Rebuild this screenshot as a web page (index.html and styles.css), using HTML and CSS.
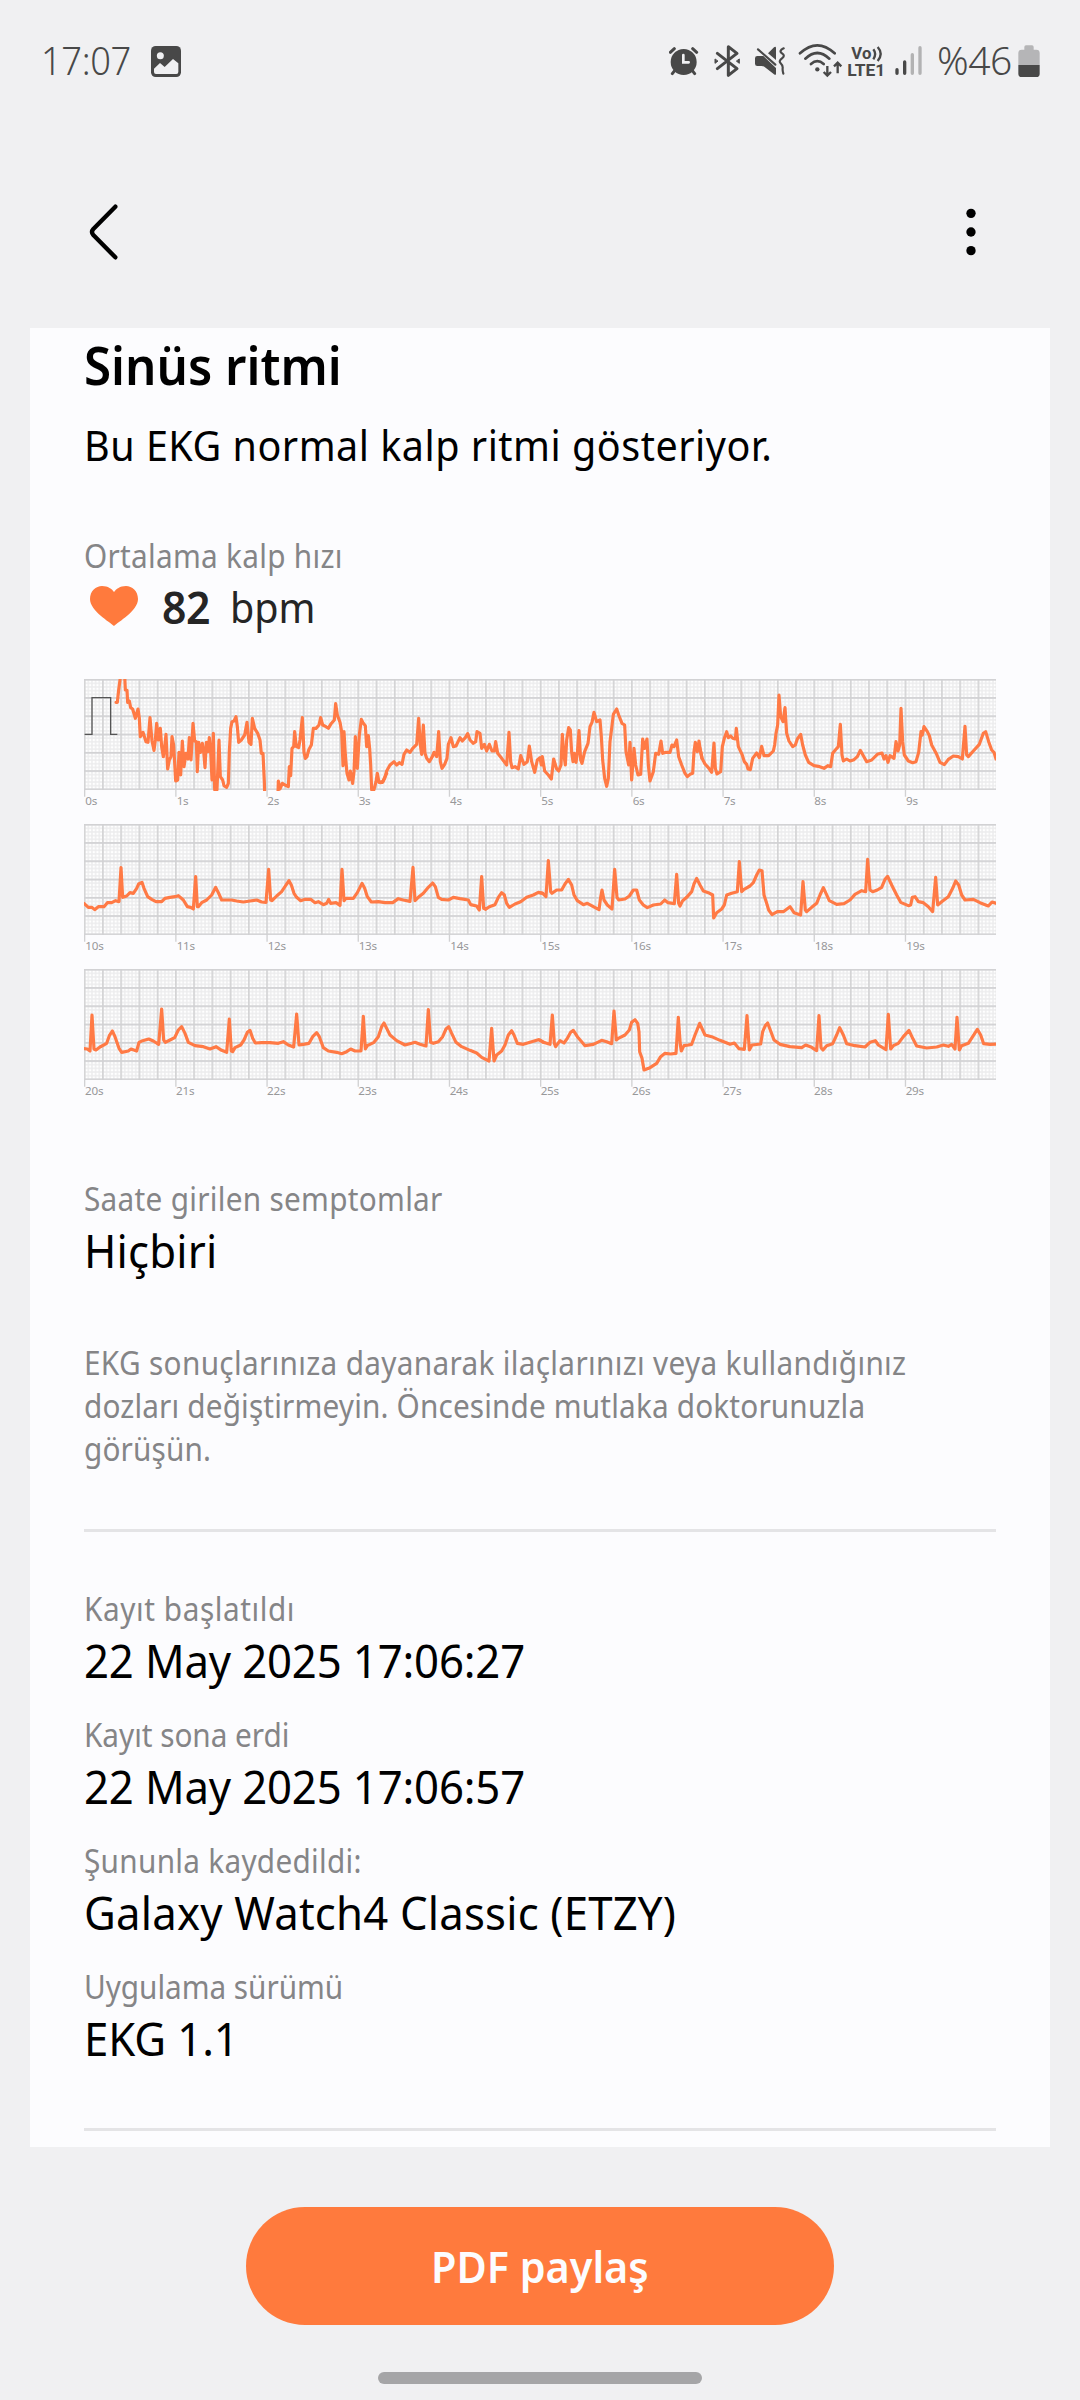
FILE: index.html
```html
<!DOCTYPE html>
<html lang="tr">
<head>
<meta charset="utf-8">
<title>EKG</title>
<link rel="stylesheet" href="styles.css">
</head>
<body>
<div class="screen">
  <header class="status">
    <span class="status-text clock">17:07</span>
    <svg class="photo" width="30" height="36" viewBox="441 69 90 108">
      <rect x="441" y="78" width="90" height="93" rx="14" fill="#484848"/>
      <circle cx="469" cy="107" r="10.5" fill="#f0f0f2"/>
      <path d="M450 146l18-17 14 12 25-24 16 13v26q0 6-6 6h-61q-6 0-6-6z" fill="#f0f0f2"/>
    </svg>
    <div class="status-icons">
      <svg width="30" height="36" viewBox="84 69 90 108" fill="none" stroke="#484848" stroke-linecap="round">
        <circle cx="128" cy="126" r="39" fill="#484848" stroke="none"/>
        <path d="M88 97l12-11M167 97l-12-11M101 152l-7 9M154 152l7 9" stroke-width="9"/>
        <path d="M127 105v22h16" stroke="#f0f0f2" stroke-width="8"/>
      </svg>
      <svg width="28" height="36" viewBox="216 69 84 108" fill="none" stroke="#484848" stroke-width="9" stroke-linecap="round" stroke-linejoin="round">
        <path d="M229 100l59 46-26 20V80l26 20-59 46"/>
        <path d="M222 118v12l8-6zM295 118v12l-8-6z" fill="#484848" stroke-width="3"/>
      </svg>
      <svg width="30" height="36" viewBox="345 69 90 108" fill="#484848">
        <path d="M345 115q0-7 7-7h18l38 36v17q0 6-6 2l-29-23q-3-2-8-2h-13q-7 0-7-7zM384 100l18-18q6-4 6 3v35z"/>
        <path d="M354 88l52 46M431 85q-16 8-5 15t0 15-4 15 6 14 2 17" fill="none" stroke="#484848" stroke-width="6.500" stroke-linecap="round"/>
      </svg>
      <svg class="wifi" width="45" height="36" viewBox="474 69 135 108" fill="none" stroke="#484848" stroke-width="8" stroke-linecap="round">
        <path d="M480 100q52-48 104 0M496 116q36-34 72 0M513 132q19-17 38 0"/>
        <circle cx="532" cy="148" r="6.500" fill="#484848" stroke="none"/>
        <path d="M562 138v27M551 156l11 11 11-11M593 160v-28M582 139l11-11 11 11" stroke-width="7" stroke-linecap="butt"/>
      </svg>
      <svg class="volte" width="39" height="36" viewBox="621 69 117 108">
        <text x="634" y="117" font-size="50" textLength="60" lengthAdjust="spacingAndGlyphs">Vo</text>
        <text x="622" y="168" font-size="50" textLength="114" lengthAdjust="spacingAndGlyphs">LTE1</text>
        <path d="M700 88q11 14 0 30M713 81q18 20 0 42" fill="none" stroke="#484848" stroke-width="7"/>
      </svg>
      <svg class="signal" width="29" height="36" viewBox="762 69 87 108" stroke-width="10" stroke-linecap="round">
        <path d="M771 149v11M794 126v34" stroke="#484848"/>
        <path d="M817 104v56M840 83v77" stroke="#b2b2b3"/>
      </svg>
      <span class="status-text percent">%46</span>
      <svg class="battery" width="22" height="36" viewBox="1135 69 66 108">
        <path d="M1136 135v-36q0-10 10-10h8v-8q0-5 5-5h18q5 0 5 5v8h8q10 0 10 10v36z" fill="#b5b5b7"/>
        <path d="M1136 135h64v26q0 10-10 10h-44q-10 0-10-10z" fill="#484848"/>
      </svg>
    </div>
  </header>

  <nav class="appbar">
    <svg width="32" height="58" viewBox="258 549 96 174" fill="none" stroke="#000" stroke-width="13" stroke-linecap="round" stroke-linejoin="round">
      <path d="M340 560l-66 67q-8 9 0 18l66 67"/>
    </svg>
    <svg width="12" height="58" viewBox="974 549 36 174">
      <circle cx="992" cy="580" r="14"/><circle cx="992" cy="636" r="14"/><circle cx="992" cy="692" r="14"/>
    </svg>
  </nav>

  <main class="card">
    <h1>Sinüs ritmi</h1>
    <p class="result">Bu EKG normal kalp ritmi gösteriyor.</p>
    <div class="label rate-label">Ortalama kalp hızı</div>
    <div class="rate">
      <svg width="48" height="41" viewBox="0 0 48 41"><path d="M24 40C20 36 0 25 0 13C0 5 6 0 12 0C18 0 22 3 24 6C26 3 30 0 36 0C42 0 48 5 48 13C48 25 28 36 24 40Z" fill="#ff7a3d"/></svg>
      <b>82</b><span>bpm</span>
    </div>

    <svg class="defs" width="0" height="0">
      <defs>
        <pattern id="minor" x="44" y="44" width="10.944" height="10.966" patternUnits="userSpaceOnUse">
          <rect width="10.944" height="10.966" fill="#ececed"/><rect x="2.100" y="2.100" width="6.800" height="6.800" fill="#ffffff"/>
        </pattern>
        <pattern id="major" x="41.500" y="41.500" width="54.720" height="54.830" patternUnits="userSpaceOnUse">
          <path d="M0 2.500h55M2.500 0v55" stroke="#d1d1d3" stroke-width="4.500"/>
        </pattern>
        <clipPath id="plot"><rect x="42" y="42" width="2736" height="336"/></clipPath>
        <g id="paper">
          <rect x="42" y="42" width="2736" height="333" fill="url(#minor)"/>
          <rect x="42" y="42" width="2736" height="333" fill="url(#major)"/>
          <path d="M44 374v21M317.600 374v21M591.200 374v21M864.800 374v21M1138.400 374v21M1412 374v21M1685.600 374v21M1959.200 374v21M2232.800 374v21M2506.400 374v21" stroke="#d1d1d3" stroke-width="4"/>
        </g>
      </defs>
    </svg>

    <div class="charts">
      <svg class="chart" viewBox="42 42 2736 435">
        <use href="#paper"/>
        <path d="M44 208h22V98h56v110h20" fill="none" stroke="#555" stroke-width="4"/>
        <g class="wave" clip-path="url(#plot)">
          <polyline points="138,112 142,112 146,75 152,30 164,30 166,75 171,76 173,112 178,108 182,128 188,132 196,160 204,132 208,160 211,215 219,202 228,230 234,232 240,158 246,228 252,256 256,225 260,175 265,225 271,190 275,245 280,275 284,245 288,208 293,312 298,285 303,275 306,215 311,240 317,348 323,345 327,262 332,330 337,228 342,305 348,265 354,282 358,218 363,285 369,175 374,228 379,230 382,320 386,232 392,262 397,235 401,260 405,308 409,232 414,260 418,218 422,260 426,345 430,205 434,374 441,374 447,225 451,335 458,345 462,362 470,367 475,355 478,260 482,190 486,170 492,168 498,155 502,185 506,232 514,225 524,210 531,172 537,232 543,238 547,160 554,190 563,205 570,225 574,265 579,265 583,350 584,384"/>
          <polyline points="624,384 625,348 630,372 637,355 645,360 655,365 658,305 662,332 666,250 671,245 674,200 679,245 686,248 690,225 697,158 702,262 706,280 711,275 716,255 724,240 730,190 738,190 747,180 752,158 758,180 768,185 775,190 782,178 793,165 797,116 802,150 810,172 815,200 819,302 822,200 826,270 831,325 837,345 841,318 848,355 852,320 856,215 862,310 868,210 874,163 880,175 886,182 890,245 895,212 899,250 902,300 905,374 912,374 918,350 922,325 927,352 938,350 950,325"/>
          <polyline transform="translate(930)" points="0,353 8,352 14,340 20,318 30,300 42,290 50,300 58,293 66,298 72,268 80,255 90,262 98,250 110,238 116,160 121,240 125,268 130,180 135,265 140,280 148,290 157,275 162,262 170,275 176,200 181,290 186,310 194,298 201,280 205,238 213,218 220,245 228,243 240,218 247,228 256,218 263,206 270,225 280,235 287,230 291,200 300,205 305,250 313,238 320,258 328,238 336,258 343,258 347,230 353,265 365,280 380,300 387,202 392,290 396,308 405,305 415,312 422,272 432,298 442,290 448,243 455,290 464,322 472,285 480,278 484,300 487,275 494,318 505,330 514,342 521,282 530,312 536,318 543,300 547,208 551,265 556,300 560,225 566,188 571,195 575,262 579,290 583,265 588,292 592,265 597,197 602,285 606,295 614,260 624,235 630,185 636,172 642,142 650,170 660,165 664,215 668,285 674,340 680,364 685,340 690,230 695,190 700,148 710,132 716,150 726,175 734,180 738,260 746,300 750,232 755,345 762,250 767,300 774,330 782,328 788,222 794,250 801,222 805,300 810,348 820,320 827,265 836,268 843,228 848,265 858,262 870,262 876,240 882,245 890,225 896,275 905,300 915,325 922,335 930,328 938,325 942,260 946,232 952,260 957,228 960,250 966,280"/>
          <polyline transform="translate(1860)" points="30,250 36,280 45,297 55,308 65,322 72,234 76,310 81,327 92,320 97,245 103,220 110,200 115,218 122,213 128,220 136,222 139,190 145,245 156,268 163,290 170,298 174,312 181,314 188,280 200,264 208,278 215,244 222,272 236,272 250,258 254,240 258,205 263,180 267,90 272,155 279,170 285,128 290,205 297,228 308,245 316,240 322,222 332,208 338,240 346,270 356,292 372,302 385,304 402,310 414,302 422,305 428,265 436,255 445,245 451,178 456,270 460,288 470,282 480,288 492,284 502,275 511,256 520,272 530,290 545,285 562,268 576,264 582,282 588,272 594,292 600,272 612,280 618,230 624,258 629,240 633,130 638,230 643,270 655,288 668,293 678,290 686,262 693,200 697,210 702,185 712,200 718,212 725,240 740,268 750,292 763,299 775,283 790,273 805,275 817,282 825,184 830,270 835,275 850,258 868,238 880,205 887,200 896,230 905,255 912,262 918,282"/>
        </g>
        <g class="ticks"><text x="46" y="419">0s</text><text x="320" y="419">1s</text><text x="592" y="419">2s</text><text x="866" y="419">3s</text><text x="1140" y="419">4s</text><text x="1414" y="419">5s</text><text x="1688" y="419">6s</text><text x="1961" y="419">7s</text><text x="2233" y="419">8s</text><text x="2508" y="419">9s</text></g>
      </svg>
      <svg class="chart" viewBox="42 42 2736 435">
        <use href="#paper"/>
        <g class="wave" clip-path="url(#plot)">
          <polyline points="42,280 55,292 66,292 74,299 85,290 102,290 112,278 125,278 137,272 147,275 153,173 158,262 170,258 180,248 190,250 200,235 206,222 216,217 222,235 233,260 245,268 258,275 275,275 285,265 300,262 315,260 325,257 340,270 352,290 362,292 370,297 377,200 382,290 385,290 395,278 410,270 425,255 437,232 445,248 455,270 470,270 485,270 500,273 520,276 540,273 560,270 575,276 588,277 596,178 602,270 606,272 620,258 635,245 648,225 657,212 664,225 672,250 680,262 692,272 705,268 722,268 735,278 745,275 760,284 770,280 776,268 782,280 798,278 810,286 816,178 822,272 828,265 850,265 862,248 876,220 884,235 892,260 904,276 925,275 945,278 968,278 985,266 1000,270 1020,274 1029,172 1035,272 1045,262 1060,250 1075,232 1088,219 1096,230 1105,262 1115,268 1135,270 1150,262 1170,266 1195,270 1202,284 1220,288 1228,300 1235,200 1241,295 1247,298 1258,290 1275,284 1285,262 1295,248 1303,255 1310,280 1318,292 1335,282 1352,275 1370,262 1390,255 1405,247 1418,250"/>
          <polyline transform="translate(1410)" points="0,248 8,250 18,260 25,152 32,245 36,250 50,240 65,240 75,222 85,208 95,225 102,255 112,272 130,284 142,280 160,290 177,299 182,262 186,240 192,270 202,285 216,297 224,178 231,262 236,270 255,267 268,258 280,240 290,240 298,270 310,285 322,293 340,285 362,282 374,270 384,278 403,281 410,193 416,280 420,288 428,272 440,262 455,245 462,222 470,205 480,225 490,243 505,248 518,255 521,324 530,308 545,297 553,285 560,255 575,250 592,245 598,155 605,245 612,238 630,228 640,218 650,195 658,180 666,182 672,255 680,280 686,300 696,314 712,305 730,305 750,290 762,308 782,315 789,215 796,300 800,305 815,292 830,280 840,255 850,233 858,250 868,272 890,283 912,281 930,270 945,253 965,242 977,245 983,148 990,240 998,245 1012,240 1025,232 1035,208 1043,199 1055,225 1070,255 1082,277 1105,287 1112,285 1117,262 1125,260 1135,275 1150,278 1165,290 1178,305 1187,202 1193,285 1205,275 1225,260 1238,235 1247,213 1256,225 1265,255 1275,270 1300,268 1320,278 1345,288 1356,276 1372,281"/>
        </g>
        <g class="ticks"><text x="46" y="419">10s</text><text x="320" y="419">11s</text><text x="593" y="419">12s</text><text x="866" y="419">13s</text><text x="1141" y="419">14s</text><text x="1414" y="419">15s</text><text x="1688" y="419">16s</text><text x="1961" y="419">17s</text><text x="2234" y="419">18s</text><text x="2509" y="419">19s</text></g>
      </svg>
      <svg class="chart" viewBox="42 42 2736 435">
        <use href="#paper"/>
        <g class="wave" clip-path="url(#plot)">
          <polyline points="42,281 52,282 60,288 66,180 72,282 78,285 90,276 110,265 118,242 127,228 135,245 147,280 155,292 175,288 183,282 200,288 207,262 218,257 236,252 250,258 266,268 275,162 281,255 286,262 300,255 314,248 325,225 335,215 345,235 355,262 375,272 400,275 420,282 438,275 455,286 470,292 478,192 484,288 488,290 495,278 512,270 522,255 532,232 540,226 548,250 556,264 575,263 600,263 625,265 640,260 655,270 671,276 680,177 687,270 700,268 717,265 728,245 740,233 748,245 760,278 775,288 800,292 815,296 830,290 842,282 855,288 873,288 880,184 886,282 892,272 912,262 925,245 935,215 942,204 950,220 960,240 980,257 1005,270 1025,265 1035,262 1050,268 1068,273 1075,164 1082,262 1090,265 1105,260 1118,245 1128,222 1136,215 1145,235 1158,262 1175,275 1200,286 1220,294 1235,307 1257,318 1265,220 1272,318 1280,300 1295,288 1305,270 1315,240 1325,227 1332,240 1342,265 1360,268 1380,262 1405,254 1422,262"/>
          <polyline transform="translate(1410)" points="0,255 10,262 30,268 37,180 43,265 47,275 60,257 72,264 82,250 92,232 100,226 112,245 125,260 135,272 160,268 185,256 200,260 215,266 222,168 229,255 235,250 255,240 268,225 275,202 285,194 293,205 297,230 299,290 306,310 312,345 330,338 350,325 362,305 375,295 392,297 408,295 415,187 421,270 424,288 432,272 445,270 455,268 465,240 479,205 488,225 495,240 515,245 540,256 570,268 583,264 597,281 613,283 621,182 628,285 636,270 662,267 668,230 676,212 683,204 692,228 702,255 720,268 750,275 785,278 797,270 815,277 830,287 837,182 843,278 849,285 860,272 878,266 890,240 899,218 910,240 920,266 945,272 975,276 990,262 1006,257 1015,270 1038,284 1045,178 1052,282 1060,272 1075,265 1090,245 1107,226 1118,250 1130,273 1160,279 1190,276 1210,270 1225,274 1235,268 1245,282 1251,187 1258,285 1265,272 1285,265 1298,245 1312,223 1322,240 1331,266 1350,268 1372,267"/>
        </g>
        <g class="ticks"><text x="45" y="419">20s</text><text x="318" y="419">21s</text><text x="591" y="419">22s</text><text x="865" y="419">23s</text><text x="1139" y="419">24s</text><text x="1412" y="419">25s</text><text x="1686" y="419">26s</text><text x="1959" y="419">27s</text><text x="2232" y="419">28s</text><text x="2507" y="419">29s</text></g>
      </svg>
    </div>

    <section class="symptoms">
      <div class="label">Saate girilen semptomlar</div>
      <div class="value short">Hiçbiri</div>
    </section>
    <p class="note">EKG sonuçlarınıza dayanarak ilaçlarınızı veya kullandığınız<br><span class="tight">dozları değiştirmeyin. Öncesinde mutlaka doktorunuzla</span><br><span class="tight">görüşün.</span></p>
    <hr>
    <section class="details">
      <div><div class="label started">Kayıt başlatıldı</div><div class="value date">22 May 2025 17:06:27</div></div>
      <div><div class="label ended">Kayıt sona erdi</div><div class="value date">22 May 2025 17:06:57</div></div>
      <div><div class="label">Şununla kaydedildi:</div><div class="value">Galaxy Watch4 Classic (ETZY)</div></div>
      <div><div class="label ended">Uygulama sürümü</div><div class="value version">EKG 1.1</div></div>
    </section>
    <hr>
  </main>

  <footer class="footer">
    <button class="share"><span>PDF paylaş</span></button>
    <div class="home"></div>
  </footer>
</div>
</body>
</html>
```
FILE: styles.css
```css
* { box-sizing: border-box; margin: 0; padding: 0; }
body { background: #f0f0f2; font-family: "Noto Sans", sans-serif; color: #000; }
svg { display: block; flex: none; }
.screen { width: 1080px; height: 2400px; overflow: hidden; display: flex; flex-direction: column; }

.status { display: flex; height: 79px; padding: 43px 40px 0 41px; }
.status-text { font-size: 39px; line-height: 34px; height: 36px; color: #484848; white-space: nowrap; font-weight: 350; transform-origin: left; }
.clock { width: 110px; letter-spacing: -.4px; transform: scaleX(.93); }
.status-icons { display: flex; gap: 14px; margin-left: auto; }
.wifi { margin-left: -1px; }
.volte { margin-left: -10px; font-family: Roboto, sans-serif; font-weight: 700; fill: #484848; }
.signal { margin-left: -6px; }
.percent { width: 75px; letter-spacing: -.5px; }
.battery { margin-left: -8px; }

.appbar { display: flex; justify-content: space-between; height: 58px; margin: 124px 103px 67px 88px; }

.card { height: 1819px; flex: none; margin: 0 30px; padding: 7px 54px 0; background: #fcfcfe; display: flex; flex-direction: column; }
/* Text blocks are slightly condensed from their left edge */
h1, .result, .label, .value, .note { transform-origin: left; white-space: nowrap; }
h1 { font-size: 53px; font-weight: 600; line-height: 60px; transform: scaleX(.93); }
.result { margin-top: 20px; font-size: 42px; line-height: 60px; letter-spacing: .55px; transform: scaleX(.94); }
.label { font-size: 32px; line-height: 43px; letter-spacing: .3px; color: #858587; transform: scaleX(.93); }
.label.started { letter-spacing: .6px; }
.label.ended { letter-spacing: -.05px; }
.rate-label { margin-top: 59px; }
.rate { display: flex; align-items: flex-start; height: 60px; padding-left: 6px; color: #252525; line-height: 60px; }
.rate svg { margin-top: 9px; }
.rate b { margin-left: 24px; width: 68px; font-size: 45px; font-weight: 600; letter-spacing: -.4px; transform: scaleX(.95); transform-origin: left; }
.rate span { font-size: 42px; transform: scaleX(.94); transform-origin: left; }

.defs { position: absolute; }
.charts { margin-top: 42px; }
.chart { width: 912px; height: 145px; }
.wave { fill: none; stroke: #ff7a45; stroke-width: 9.500px; stroke-linejoin: round; stroke-linecap: round; }
.ticks { font-size: 35px; fill: #98989a; letter-spacing: -.6px; }

.symptoms { margin-top: 63px; }
.value { font-size: 46px; line-height: 60px; letter-spacing: .2px; transform: scaleX(.95); }
.value.date { letter-spacing: -.15px; }
.value.version { letter-spacing: -.1px; }
.note { margin-top: 61px; font-size: 32px; line-height: 43px; letter-spacing: .34px; color: #858587; transform: scaleX(.93); }
.tight { letter-spacing: .16px; }
hr { border: 0; height: 3px; flex: none; margin-top: 59px; background: #e4e4e6; }
.details { margin-top: 55px; display: flex; flex-direction: column; gap: 23px; }
.details + hr { margin-top: 60px; }

.footer { display: flex; flex-direction: column; align-items: center; }
.share { width: 588px; height: 118px; margin-top: 60px; padding-bottom: 1px; border: 0; border-radius: 59px; background: #ff7a3d; color: #fcfcfe; font: 600 44px "Noto Sans", sans-serif; }
.share span { display: inline-block; transform: scaleX(.94); }
.home { width: 324px; height: 12px; margin-top: 47px; border-radius: 6px; background: #a5a5a7; }
```
